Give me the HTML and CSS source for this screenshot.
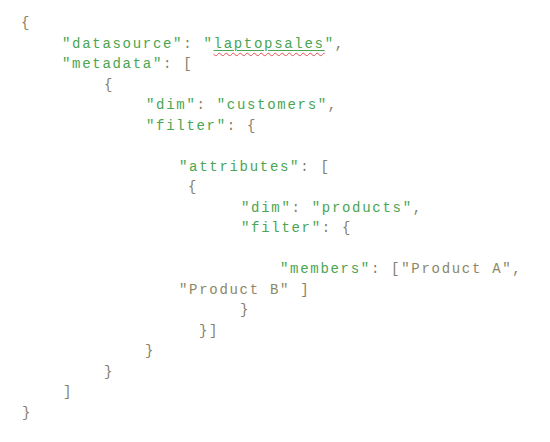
FILE: index.html
```html
<!DOCTYPE html>
<html>
<head>
<meta charset="utf-8">
<link rel="stylesheet" href="styles.css">
</head>
<body>
<div class="code">
  <div class="ln x20"><span class="p">{</span></div>
  <div class="ln x61"><span class="s">"datasource"</span><span class="p">: </span><span class="s">"<span class="link"><span class="spell">laptopsales</span></span>"</span><span class="p">,</span></div>
  <div class="ln x61"><span class="s">"metadata"</span><span class="p">: [</span></div>
  <div class="ln x103"><span class="p">{</span></div>
  <div class="ln x145"><span class="s">"dim"</span><span class="p">: </span><span class="s">"customers"</span><span class="p">,</span></div>
  <div class="ln x145"><span class="s">"filter"</span><span class="p">: {</span></div>
  <div class="ln blank"></div>
  <div class="ln x178"><span class="s">"attributes"</span><span class="p">: [</span></div>
  <div class="ln x187"><span class="p">{</span></div>
  <div class="ln x240"><span class="s">"dim"</span><span class="p">: </span><span class="s">"products"</span><span class="p">,</span></div>
  <div class="ln x240"><span class="s">"filter"</span><span class="p">: {</span></div>
  <div class="ln blank"></div>
  <div class="ln x279"><span class="s">"members"</span><span class="p">: [</span><span class="v">"Product A"</span><span class="p">,</span></div>
  <div class="ln x178"><span class="v">"Product B"</span><span class="p"> ]</span></div>
  <div class="ln x239"><span class="p">}</span></div>
  <div class="ln x198"><span class="p">}]</span></div>
  <div class="ln x144"><span class="p">}</span></div>
  <div class="ln x103"><span class="p">}</span></div>
  <div class="ln x62"><span class="p">]</span></div>
  <div class="ln x21"><span class="p">}</span></div>
</div>
</body>
</html>
```

FILE: styles.css
```css
html, body {
  margin: 0;
  padding: 0;
  background: #ffffff;
}

.code {
  display: flex;
  flex-direction: column;
  padding-top: 13px;
  font-family: "Liberation Mono", "Courier New", monospace;
  font-size: 14px;
  letter-spacing: 1.7px;
  line-height: 20.5px;
  white-space: pre;
}

.ln {
  height: 20.5px;
  margin-left: 1px;
}

.s { color: #4aa552; }
.v { color: #8a8766; }
.p { color: #86806a; }

.link {
  text-decoration: underline solid #4aa552;
  text-decoration-thickness: 1px;
  text-underline-offset: 2px;
}

.spell {
  text-decoration: underline wavy #e65050;
  text-decoration-thickness: 1px;
  text-underline-offset: 4px;
}

.x20 { padding-left: 20px; }
.x21 { padding-left: 21px; }
.x61 { padding-left: 61px; }
.x62 { padding-left: 62px; }
.x103 { padding-left: 103px; }
.x144 { padding-left: 144px; }
.x145 { padding-left: 145px; }
.x178 { padding-left: 178px; }
.x187 { padding-left: 187px; }
.x198 { padding-left: 198px; }
.x239 { padding-left: 239px; }
.x240 { padding-left: 240px; }
.x279 { padding-left: 279px; }
```
